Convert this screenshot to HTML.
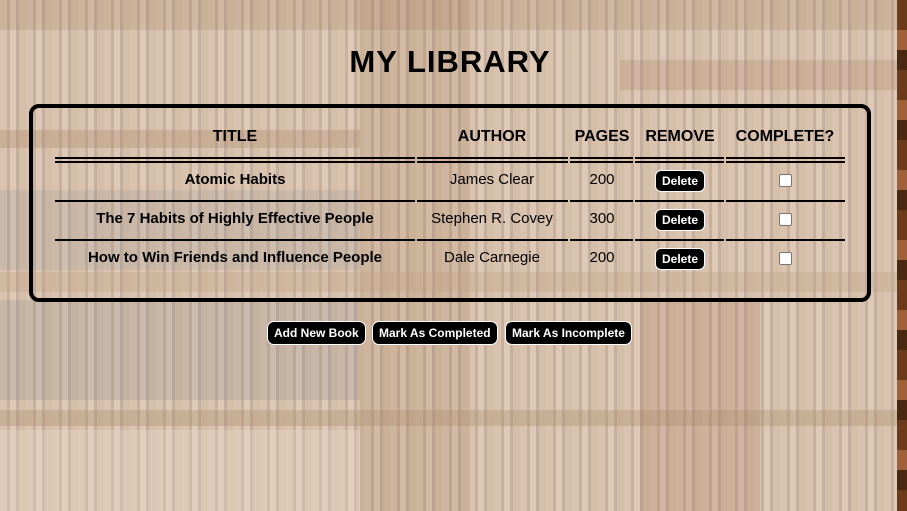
<!DOCTYPE html>
<html><head><style>
html,body{margin:0;padding:0;width:907px;height:511px;overflow:hidden;font-family:"Liberation Sans",sans-serif;color:#000}
.bg{position:absolute;inset:0;background:
repeating-linear-gradient(90deg,#d9c3ae 0 7px,#c8b09c 7px 10px,#ddc9b6 10px 16px,#c4ae9e 16px 19px,#d6bfa8 19px 26px),
#d8c2ad}
.p{position:absolute}
.right{position:absolute;right:0;top:0;width:10px;height:511px;background:repeating-linear-gradient(180deg,#6b3b1c 0 30px,#a0603a 30px 50px,#4a2812 50px 70px)}
h1{position:absolute;left:0;width:900px;top:44px;margin:0;text-align:center;font-size:31px;font-weight:bold;letter-spacing:1px}
.box{position:absolute;left:29px;top:104px;width:834px;height:190px;border:4px solid #000;border-radius:10px}
.t{position:absolute;font-size:15px;white-space:nowrap;transform:translateX(-50%)}
.h{font-weight:bold;font-size:16px;top:128px}
.b{font-weight:bold}
.ln{position:absolute;height:2px;background:#000}
.del{position:absolute;background:#000;color:#fff;font-size:12px;font-weight:bold;border-radius:6px;padding:3px 6px;transform:translateX(-50%);border:1px solid #fff}
.cb{position:absolute;width:11px;height:11px;background:#fff;border:1px solid #777;border-radius:2px}
.btn{position:absolute;top:321px;background:#000;color:#fff;font-size:12px;font-weight:bold;border-radius:7px;padding:4px 6px;border:1px solid #fff;white-space:nowrap}
</style></head><body>
<div class="bg"></div>
<div class="p" style="left:0;top:0;width:897px;height:30px;background:rgba(150,110,80,.18)"></div>
<div class="p" style="left:0;top:130px;width:360px;height:18px;background:rgba(170,130,100,.3)"></div>
<div class="p" style="left:0;top:190px;width:360px;height:80px;background:rgba(120,130,140,.15)"></div>
<div class="p" style="left:0;top:300px;width:360px;height:100px;background:rgba(120,130,140,.18)"></div>
<div class="p" style="left:360px;top:0;width:110px;height:511px;background:rgba(150,100,70,.15)"></div>
<div class="p" style="left:620px;top:60px;width:277px;height:30px;background:rgba(150,100,70,.18)"></div>
<div class="p" style="left:640px;top:300px;width:120px;height:211px;background:rgba(150,100,70,.18)"></div>
<div class="p" style="left:0;top:272px;width:897px;height:20px;background:rgba(190,160,130,.3)"></div>
<div class="p" style="left:0;top:410px;width:897px;height:16px;background:rgba(170,140,110,.35)"></div>
<div class="p" style="left:0;top:430px;width:360px;height:81px;background:rgba(240,225,210,.25)"></div>
<div class="right"></div>
<h1>MY LIBRARY</h1>
<div class="box"></div>
<div class="t h" style="left:235px">TITLE</div>
<div class="t h" style="left:492px">AUTHOR</div>
<div class="t h" style="left:602px">PAGES</div>
<div class="t h" style="left:680px">REMOVE</div>
<div class="t h" style="left:785px">COMPLETE?</div>
<div class="ln" style="left:55px;width:360px;top:157px"></div><div class="ln" style="left:55px;width:360px;top:161px"></div>
<div class="ln" style="left:417px;width:151px;top:157px"></div><div class="ln" style="left:417px;width:151px;top:161px"></div>
<div class="ln" style="left:570px;width:63px;top:157px"></div><div class="ln" style="left:570px;width:63px;top:161px"></div>
<div class="ln" style="left:635px;width:89px;top:157px"></div><div class="ln" style="left:635px;width:89px;top:161px"></div>
<div class="ln" style="left:726px;width:119px;top:157px"></div><div class="ln" style="left:726px;width:119px;top:161px"></div>
<div class="ln" style="left:55px;width:360px;top:200px"></div><div class="ln" style="left:417px;width:151px;top:200px"></div><div class="ln" style="left:570px;width:63px;top:200px"></div><div class="ln" style="left:635px;width:89px;top:200px"></div><div class="ln" style="left:726px;width:119px;top:200px"></div>
<div class="ln" style="left:55px;width:360px;top:239px"></div><div class="ln" style="left:417px;width:151px;top:239px"></div><div class="ln" style="left:570px;width:63px;top:239px"></div><div class="ln" style="left:635px;width:89px;top:239px"></div><div class="ln" style="left:726px;width:119px;top:239px"></div>

<div class="t b" style="left:235px;top:171px">Atomic Habits</div>
<div class="t" style="left:492px;top:171px">James Clear</div>
<div class="t" style="left:602px;top:171px">200</div>
<div class="del" style="left:680px;top:170px">Delete</div>
<div class="cb" style="left:779px;top:174px"></div>

<div class="t b" style="left:235px;top:210px">The 7 Habits of Highly Effective People</div>
<div class="t" style="left:492px;top:210px">Stephen R. Covey</div>
<div class="t" style="left:602px;top:210px">300</div>
<div class="del" style="left:680px;top:209px">Delete</div>
<div class="cb" style="left:779px;top:213px"></div>

<div class="t b" style="left:235px;top:249px">How to Win Friends and Influence People</div>
<div class="t" style="left:492px;top:249px">Dale Carnegie</div>
<div class="t" style="left:602px;top:249px">200</div>
<div class="del" style="left:680px;top:248px">Delete</div>
<div class="cb" style="left:779px;top:252px"></div>

<div class="btn" style="left:267px">Add New Book</div>
<div class="btn" style="left:372px">Mark As Completed</div>
<div class="btn" style="left:505px">Mark As Incomplete</div>
</body></html>
